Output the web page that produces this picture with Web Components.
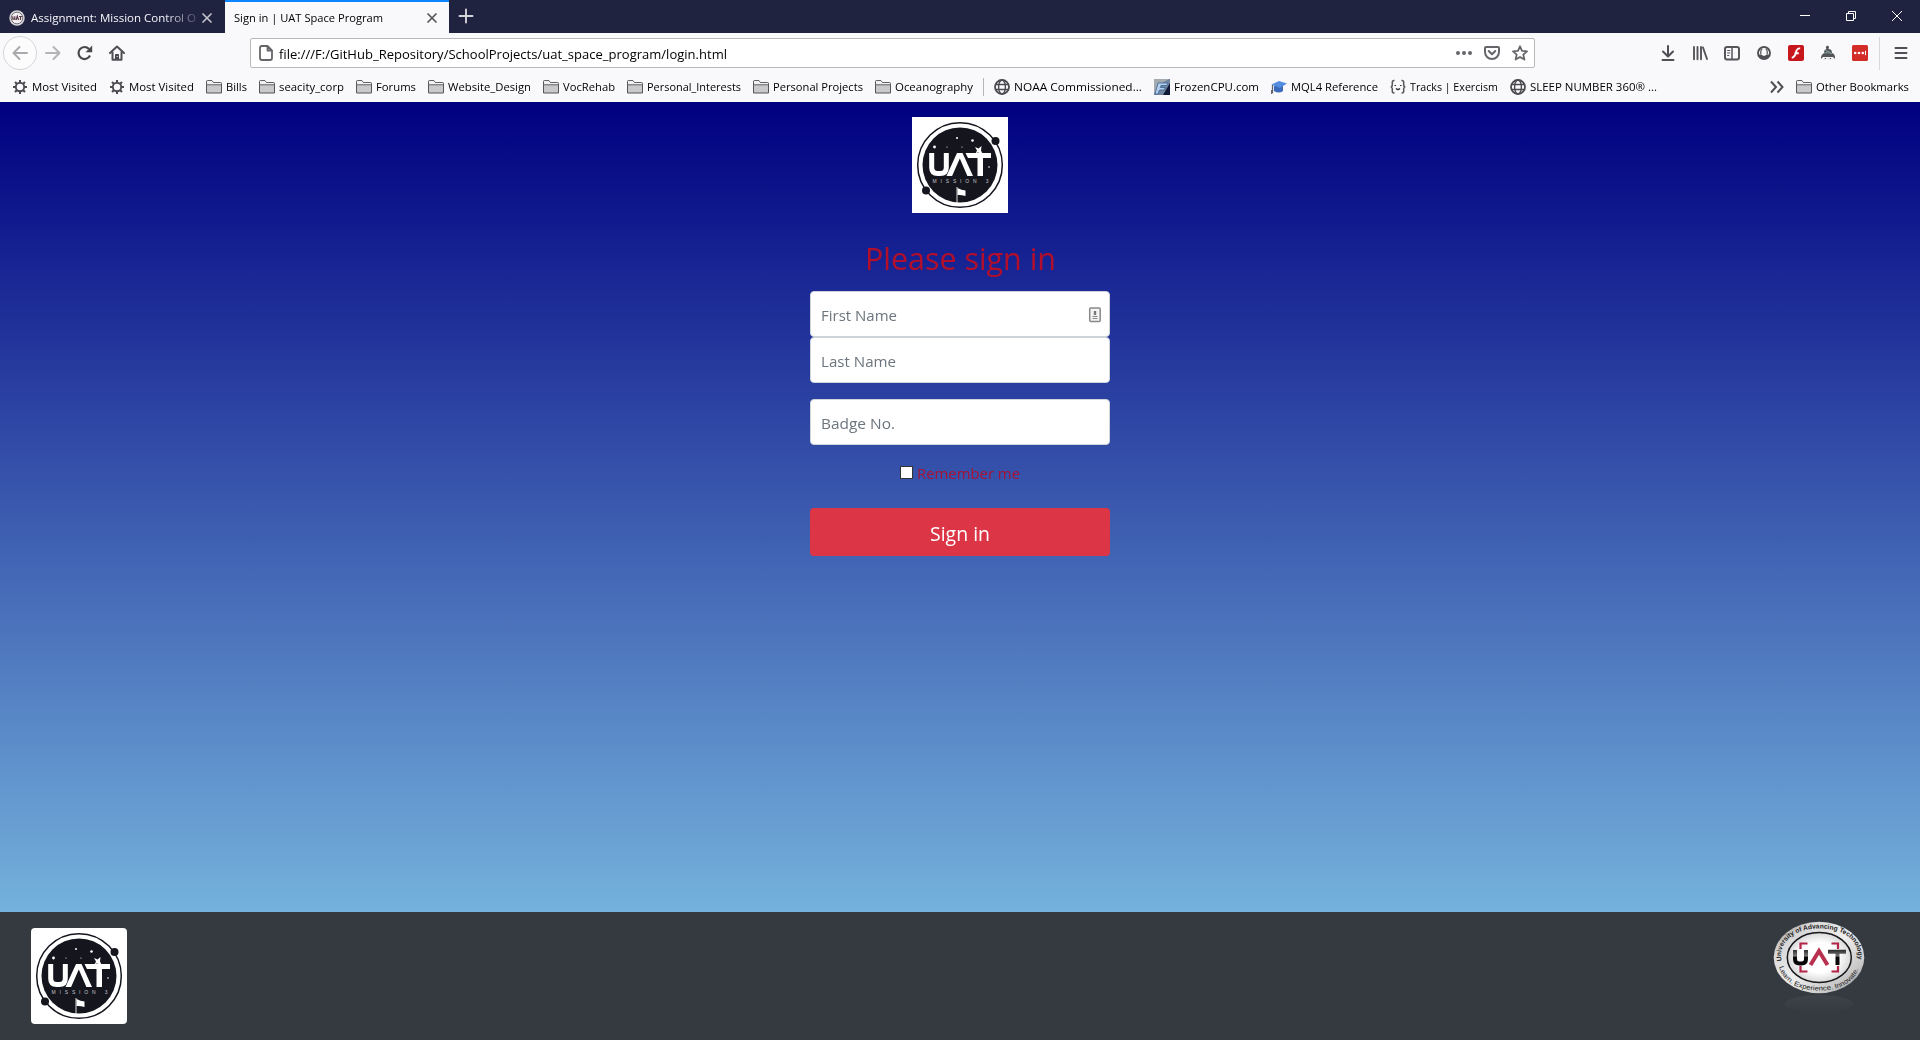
<!DOCTYPE html>
<html lang="en">
<head>
<meta charset="utf-8">
<title>Sign in | UAT Space Program</title>
<style>
html,body{margin:0;height:100%;overflow:hidden}
body{font-family:"Open Sans","Noto Sans",sans-serif}
</style>
</head>
<body>
<browser-window></browser-window>
<script>
const define = (name, html, after) => customElements.define(name, class extends HTMLElement {
  connectedCallback() {
    if (this.shadowRoot) return;
    const root = this.attachShadow({mode: 'open'});
    root.innerHTML = typeof html === 'function' ? html(this) : html;
    if (after) after(this, root);
  }
});

/* One-line label condensed or widened to the width given in w. */
define('fit-text', el => `<style>
  :host{display:block;flex:none;width:${el.getAttribute('w')}px;white-space:nowrap}
  span{display:inline-block;transform-origin:0 50%}
  </style><span><slot></slot></span>`, (el, root) => {
  const s = root.querySelector('span');
  const n = s.getBoundingClientRect().width;
  if (n) s.style.transform = `scaleX(${el.getAttribute('w') / n})`;
});

const G = 'fill="none" stroke="#505054" stroke-width="2" stroke-linecap="round" stroke-linejoin="round"';
const icons = {
  gear: `<circle cx="8" cy="8" r="4.2" fill="none" stroke="#4c4c50" stroke-width="1.9"/><g stroke="#4c4c50" stroke-width="2"><path d="M8 1v2.5M8 12.500v2.500M1 8h2.500M12.500 8h2.500M3 3l1.800 1.800M11.200 11.200l1.800 1.800M13 3l-1.800 1.800M4.800 11.200l-1.800 1.800"/></g>`,
  folder: `<path d="M.5 14V2.500q0-.9.9-.9H6l1.500 2h7.100q.9 0 .9.900V14z" fill="#c9c9cc" stroke="#55555a"/><path d="M1 2.100h4.800l1.400 2h7.800v1.400H1z" fill="#f1f1f2"/><path d="M.5 5.800h15" stroke="#66666a"/>`,
  globe: `<g fill="none" stroke="#4c4c50" stroke-width="1.400"><circle cx="8" cy="8" r="7"  stroke-width="1.800"/><ellipse cx="8" cy="8" rx="3.400" ry="7"/><path d="M1.500 5.500h13M1.500 10.500h13"/></g>`,
  frozen: `<path d="M0 0h16v16H0z" fill="#71859f"/><path d="M0 0h15L8 4 2 12 0 15z" fill="#a4abb0"/><path d="M16 4v12H9z" fill="#101a38"/><path d="M4 4h10l-1 2.500H7l-.7 2h5L10 11H5.500L4 15H1z" fill="#b4d0ee" stroke="#3c6595" stroke-width=".8"/>`,
  cap: `<path d="M3 7v5q5 3 9 0V6z" fill="#3a6cbb"/><path d="M.5 5.500L8 2l8 2.500L9 9z" fill="#548ce0"/><path d="M1.500 6v8M.7 11v4" stroke="#5b626c" stroke-width="1.300"/>`,
  tracks: `<path d="M4.500 1.500H4q-1.700 0-1.700 2v2Q2.300 8 .7 8q1.600 0 1.600 2v2q0 2 1.700 2h.5M11.500 1.500h.5q1.700 0 1.700 2v2q0 2.500 1.600 2.500-1.600 0-1.600 2v2q0 2-1.700 2h-.5" fill="none" stroke="#55555a" stroke-width="1.500"/><path d="M4.500 6.500h1.600M10 6.500h1.600M6 9.500q2 2 4 0" fill="none" stroke="#333" stroke-width="1.200"/>`,
  more: `<path d="M2 2.500L7 8l-5 5.500M8.500 2.500l5 5.500-5 5.500" fill="none" stroke="#505054" stroke-width="2"/>`,
  back: `<path d="M15 8H1.500M7.500 2L1.500 8l6 6" fill="none" stroke="#aaaaad" stroke-width="2" stroke-linecap="round" stroke-linejoin="round"/>`,
  fwd: `<path d="M1 8h13.500M8.500 2l6 6-6 6" fill="none" stroke="#b4b4b7" stroke-width="2" stroke-linecap="round" stroke-linejoin="round"/>`,
  reload: `<path d="M13 10.500A6 6 0 1 1 12 4" fill="none" stroke="#48484c" stroke-width="2.200"/><path d="M15.200.5v6.800H8.500z" fill="#48484c"/>`,
  home: `<path d="M1 8l7-6.500L15 8M3.500 7.500V14.700h9V7.500" ${G}/><path d="M6.500 14V9.500h3V14" fill="#48484c" stroke="#48484c"/><path d="M8.200 11v1" stroke="#fff"/>`,
  page: `<path d="M3.500 1h6L14 5.500V13q0 2-2 2H4q-2 0-2-2V3q0-2 2-2zM9.500 1v4.500H14" fill="none" stroke="#66666a" stroke-width="1.800" stroke-linejoin="round"/>`,
  dots: `<g fill="#66666a"><circle cx="2" cy="8" r="2"/><circle cx="8" cy="8" r="2"/><circle cx="14" cy="8" r="2"/></g>`,
  pocket: `<path d="M2 2h12q1 0 1 1v4a7 7 0 0 1-14 0V3q0-1 1-1z" fill="none" stroke="#66666a" stroke-width="2"/><path d="M4.700 6L8 9.200 11.300 6" fill="none" stroke="#66666a" stroke-width="2" stroke-linecap="round" stroke-linejoin="round"/>`,
  star: `<path d="M8 1.300l2 4.500 5 .5-3.700 3.300 1.100 5L8 12l-4.400 2.600 1.100-5L1 6.300l5-.5z" fill="none" stroke="#66666a" stroke-width="1.800" stroke-linejoin="round"/>`,
  down: `<path d="M8 1v10M3 6.500l5 5 5-5M2.500 15h11" ${G}/>`,
  library: `<path d="M2 2v12.200M5.500 2v12.200M9 2v12.200M11 2.500l4 11.500" fill="none" stroke="#55555a" stroke-width="1.900" stroke-linecap="round"/>`,
  sidebar: `<rect x="1" y="2" width="14" height="12.500" rx="2" fill="none" stroke="#55555a" stroke-width="2"/><path d="M8 2v12" stroke="#55555a" stroke-width="1.500"/><path d="M3.200 5.500h3M3.200 8h3M3.200 10.500h2" stroke="#55555a"/>`,
  account: `<circle cx="8" cy="8" r="6" fill="none" stroke="#505054" stroke-width="1.900"/><path d="M2.500 9.500Q5 9.500 5.500 9.800 8 12 10.500 9.800 11 9.500 13.500 9.500 12 14 8 14T2.500 9.500z" fill="#505054"/><path d="M4.800 9.500V6.500q0-2 1.500-2.700M11.200 9.500V6.500q0-2-1.500-2.700" fill="none" stroke="#505054" stroke-width="1.200"/>`,
  flash: `<rect width="16" height="16" rx="2" fill="#c8161d"/><path d="M12.200 3.400Q9 3 8 7.200 7 12 3.800 12.800M6.500 8.200h4.300" fill="none" stroke="#fff" stroke-width="1.900"/>`,
  monkey: `<path d="M1 14q-.5-4 3-6Q4 4 6.500 4.200 5 2 7 .8q2-.5 2 1.500L8.500 4Q12 4 12 8q3.500 1 3 6l-2-2H3z" fill="#51555a"/><path d="M4 8q3-1 8 .5M5.500 5.500l5 2" stroke="#86a094" stroke-width="1" fill="none"/><path d="M3 13q5-2 10 0v2H3z" fill="#ececec"/><path d="M5.300 13v1M10.300 13v1" stroke="#333"/>`,
  pass: `<rect width="16" height="16" rx="1.500" fill="#d32d27"/><g fill="#fff"><circle cx="3.200" cy="8" r="1.300"/><circle cx="7" cy="8" r="1.300"/><circle cx="10.800" cy="8" r="1.300"/><path d="M13 5.800h1v4.400h-1z"/></g>`,
  menu: `<path d="M2.500 3h11M2.500 8h11M2.500 13h11" ${G}/>`,
  min: `<path d="M3 7.500h10" stroke="#fff"/>`,
  restore: `<path d="M3.500 5.500h7v7h-7zM5.500 5.500v-2h7v7h-2" fill="none" stroke="#fff"/>`,
  close: `<path d="M3 3l10 10M13 3L3 13" stroke="#fff"/>`,
  x: `<path d="M4 4l8 8M12 4l-8 8" stroke="currentColor" stroke-width="1.700" stroke-linecap="round"/>`,
  plus: `<path d="M8 1.500v13M1.500 8h13" stroke="#d4d4dd" stroke-width="1.900" stroke-linecap="round"/>`,
  fav: `<circle cx="8" cy="8" r="7.700" fill="#d8d5d8"/><circle cx="8" cy="8" r="5.800" fill="#f4f0f2" stroke="#77727a"/><path d="M3.800 6.200v3h2v-3M7 10l1.300-3.800L9.500 10M10 6.500h3.200M11.500 6.500V10" fill="none" stroke="#5b3d49" stroke-width="1.200"/>`,
  contact: `<rect x="2.700" y="1" width="10.500" height="13.500" rx="1" fill="#f4f4f4" stroke="#88888b" stroke-width="1.500"/><path d="M8 4v4" stroke="#77777a" stroke-width="2.400"/><path d="M5.500 9.500h5M5.500 11.500h5" stroke="#88888b" stroke-width="1.200"/>`
};
define('ui-icon', el => `<style>:host{display:block;flex:none;width:16px;height:16px}svg{display:block}</style>
  <svg width="16" height="16" viewBox="0 0 16 16">${icons[el.getAttribute('name')]}</svg>`);

define('browser-tab', `<style>
  :host{display:flex;align-items:center;box-sizing:border-box;width:224px;height:33px;color:#f5f5fa;font-size:11.5px;line-height:16px;padding:3px 9px 0 9px;border-top:0}
  :host([active]){background:#f9f9fb;color:#000;border-top:2px solid #0a84ff;padding-top:1px}
  .t{flex:1;overflow:hidden;display:flex;gap:6px}
  :host(:not([active])) .t{-webkit-mask-image:linear-gradient(90deg,#000 155px,transparent 195px);mask-image:linear-gradient(90deg,#000 155px,transparent 195px)}
  ui-icon{color:#c2c2cc}:host([active]) ui-icon{color:#55555a}
  </style><div class="t"><slot></slot></div><ui-icon name="x"></ui-icon>`);

define('tab-strip', `<style>
  :host{display:flex;height:33px;background:#202340;align-items:stretch}
  .first{width:225px;padding-right:10px}
  .plus{padding:8px 0 0 9px}.sp{flex:1}
  .win{display:flex;gap:30px;padding:8px 15px 0 0}
  </style>
  <browser-tab class="first"><ui-icon name="fav"></ui-icon><fit-text w="165">Assignment: Mission Control O</fit-text></browser-tab>
  <browser-tab active><fit-text w="149">Sign in | UAT Space Program</fit-text></browser-tab>
  <ui-icon class="plus" name="plus"></ui-icon><div class="sp"></div>
  <div class="win"><ui-icon name="min"></ui-icon><ui-icon name="restore"></ui-icon><ui-icon name="close"></ui-icon></div>`);

define('nav-bar', `<style>
  :host{display:flex;align-items:center;height:40px;box-sizing:border-box;padding-left:3px;background:#f9f9fb}
  .back{width:32px;height:32px;border:1px solid #d5d5d8;border-radius:50%;display:grid;place-items:center;background:#fcfcfd}
  .nav{display:flex;gap:16px;margin-left:8px}
  .url{box-sizing:border-box;width:1285px;height:30px;margin-left:125px;background:#fff;border:1px solid #b9b9bc;border-radius:2px;display:flex;align-items:center;padding:0 6px 0 7px;font-size:13.300px;line-height:20px;color:#000}
  .url fit-text{margin-left:5px;padding-top:2px}.acts{margin-left:auto;display:flex;gap:12px}
  .tools{display:flex;gap:16px;margin-left:125px}
  .sep{width:1px;height:33px;background:#d7d7da;margin:0 13px 0 11px}
  </style>
  <div class="back"><ui-icon name="back"></ui-icon></div>
  <div class="nav"><ui-icon name="fwd"></ui-icon><ui-icon name="reload"></ui-icon><ui-icon name="home"></ui-icon></div>
  <div class="url"><ui-icon name="page"></ui-icon><fit-text w="448">file:///F:/GitHub_Repository/SchoolProjects/uat_space_program/login.html</fit-text>
  <div class="acts"><ui-icon name="dots"></ui-icon><ui-icon name="pocket"></ui-icon><ui-icon name="star"></ui-icon></div></div>
  <div class="tools">${['down','library','sidebar','account','flash','monkey','pass'].map(n => `<ui-icon name="${n}"></ui-icon>`).join('')}</div>
  <div class="sep"></div><ui-icon name="menu"></ui-icon>`);

define('book-mark', el => `<style>:host{display:flex;align-items:center;gap:4px;flex:none}fit-text{line-height:16px}</style>
  <ui-icon name="${el.getAttribute('icon')}"></ui-icon><fit-text w="${el.getAttribute('w')}">${el.getAttribute('label')}</fit-text>`);

const bm = a => a.map(([i, w, l]) => `<book-mark icon="${i}" w="${w}" label="${l}"></book-mark>`).join('');
define('bookmark-bar', `<style>
  :host{display:flex;align-items:center;gap:12px;height:29px;box-sizing:border-box;padding:0 11px 1px 12px;background:#f9f9fb;font-size:11.500px;color:#000}
  .sep{width:1px;height:18px;background:#b5b5b8;margin:0 -2px}
  .more{margin-left:auto;margin-right:-1px}
  </style>
  ${bm([['gear',65,'Most Visited'],['gear',65,'Most Visited'],['folder',21,'Bills'],['folder',65,'seacity_corp'],['folder',40,'Forums'],['folder',83,'Website_Design'],['folder',52,'VocRehab'],['folder',94,'Personal_Interests'],['folder',90,'Personal Projects'],['folder',78,'Oceanography']])}
  <div class="sep"></div>
  ${bm([['globe',128,'NOAA Commissioned...'],['frozen',85,'FrozenCPU.com'],['cap',87,'MQL4 Reference'],['tracks',88,'Tracks | Exercism'],['globe',127,'SLEEP NUMBER 360® ...']])}
  <ui-icon class="more" name="more"></ui-icon>${bm([['folder',93,'Other Bookmarks']])}`);

define('mission-logo', `<style>:host{display:block;width:96px;height:96px;background:#fff;overflow:hidden}svg{display:block}</style>
  <svg width="96" height="96" viewBox="0 0 96 96">
  <circle cx="48" cy="48" r="42.300" fill="#fff" stroke="#14151d" stroke-width="1.500"/>
  <circle cx="48" cy="48" r="37.500" fill="#14151d"/>
  <circle cx="83.500" cy="24" r="4" fill="#14151d"/><circle cx="14" cy="73.500" r="4" fill="#14151d"/>
  <path d="M19.700 36V50.500q0 6 6 6h2.600q6 0 6-6V36" fill="none" stroke="#fff" stroke-width="5"/>
  <path d="M34.500 59L45 36h5.500L61 59h-5.600L47.800 41.500 40.100 59z" fill="#fff"/>
  <path d="M53.500 36h25.500v5H71v18h-5.500V41H56z" fill="#fff"/>
  <path d="M63 30l3.500 1.500 3-2.500-.5 4.500 1.500 3-5-1-2 1 1.500-3z" fill="#fff"/>
  <g fill="#fff"><circle cx="22.500" cy="30" r="1.400"/><circle cx="45" cy="21" r="1"/><circle cx="60.500" cy="23.500" r="1.300"/><circle cx="35" cy="30" r=".6"/><circle cx="50" cy="30" r=".6"/><circle cx="77" cy="50" r=".8"/></g>
  <path d="M45 70v16" stroke="#ddd" stroke-width="1"/><path d="M45.500 71q4 2 8 2.500v5.500q-5-1.500-8-1z" fill="#fff"/>
  <text x="20.500" y="65.700" font-family="Liberation Sans" font-size="5" fill="#c4c4ca" textLength="56">MISSION 3</text></svg>`);

define('uat-seal', `<style>:host{display:block;width:92px;height:96px}svg{display:block;overflow:visible}</style>
  <svg width="92" height="96" viewBox="0 0 92 96"><defs>
  <linearGradient id="m" x1="0" y1="0" x2="1" y2="1"><stop offset="0" stop-color="#777"/><stop offset=".22" stop-color="#d8d8d8"/><stop offset=".5" stop-color="#eee"/><stop offset=".78" stop-color="#c8c8c8"/><stop offset="1" stop-color="#828282"/></linearGradient>
  <radialGradient id="w"><stop offset=".6" stop-color="#fff"/><stop offset="1" stop-color="#d8d8d8"/></radialGradient>
  <linearGradient id="r" x1="0" y1="0" x2="0" y2="1"><stop offset="0" stop-color="#fff" stop-opacity=".05"/><stop offset="1" stop-color="#fff" stop-opacity="0"/></linearGradient>
  <linearGradient id="k" gradientUnits="userSpaceOnUse" x1="0" y1="28" x2="0" y2="45"><stop offset="0" stop-color="#222"/><stop offset=".4" stop-color="#777"/><stop offset=".5" stop-color="#080808"/></linearGradient>
  <path id="up" d="M8.500 40C5 22 20 7.500 46.500 7.500S88 22 84.500 40"/><path id="lo" d="M5.500 44C9 61 25 69.500 46 69.500S83 61 86.500 44"/></defs>
  <ellipse cx="46" cy="83" rx="34" ry="9" fill="url(#r)"/>
  <ellipse cx="46" cy="36.500" rx="45.300" ry="35.800" fill="url(#m)"/>
  <ellipse cx="46.300" cy="36.500" rx="32" ry="25" fill="url(#w)" stroke="#17171c" stroke-width="1.500"/>
  <g font-family="Liberation Sans Narrow,Liberation Sans" fill="#222"><text font-size="6.700" font-weight="bold" textLength="114" lengthAdjust="spacingAndGlyphs"><textPath href="#up">University of Advancing Technology</textPath></text>
  <text font-size="6.700" textLength="98" lengthAdjust="spacingAndGlyphs"><textPath href="#lo" startOffset="2">Learn. Experience. Innovate.</textPath></text></g>
  <path d="M27.500 28v-5.500h7M58.500 22.500H65V28M27.500 45v5.500h7M58.500 50.500H65V45" fill="none" stroke="#b32447" stroke-width="2.200"/>
  <path d="M22 29v9q0 4.500 4.500 4.500h2q4.500 0 4.500-4.500v-9M55 30.700h18M64.500 30.700V44" fill="none" stroke="url(#k)" stroke-width="4"/>
  <path d="M37.500 44L46 30l8.500 14" fill="none" stroke="#b8314e" stroke-width="4"/></svg>`);

define('form-field', `<style>
  :host{display:flex;align-items:center;justify-content:space-between;box-sizing:border-box;width:300px;height:46px;border:1px solid #ced4da;border-radius:4px;background:#fff;padding:1px 6px 0 10px;color:#6c757d;font-size:15.300px;line-height:24px}
  ui-icon{margin-top:-3px}</style><slot></slot>`);

define('sign-in-page', `<style>
  :host{display:flex;flex-direction:column;align-items:center;height:810px;box-sizing:border-box;padding-top:15px;background:linear-gradient(#000080 0,#87ceeb 938px) 0 0/100% 938px no-repeat;color:#b30f2b}
  .h{font-size:31.500px;line-height:38px;margin:26px 0 14px}
  .last{margin-bottom:16px}
  .rem{display:flex;align-items:center;gap:4px;font-size:15.300px;line-height:24px;margin:16px 0 23px;color:#a81236}
  .box{width:13px;height:13px;box-sizing:border-box;background:#fff;border:1px solid #333;margin-top:-1px}
  .btn{width:300px;height:48px;border-radius:4px;background:#dc3545;color:#fff;display:flex;justify-content:center;align-items:center;font-size:19.300px;line-height:28px;box-sizing:border-box;padding-top:4px}
  </style>
  <mission-logo></mission-logo>
  <fit-text class="h" w="191">Please sign in</fit-text>
  <form-field><fit-text w="76">First Name</fit-text><ui-icon name="contact"></ui-icon></form-field>
  <form-field class="last"><fit-text w="75">Last Name</fit-text></form-field>
  <form-field><fit-text w="74">Badge No.</fit-text></form-field>
  <div class="rem"><div class="box"></div><fit-text w="103">Remember me</fit-text></div>
  <div class="btn"><fit-text w="60">Sign in</fit-text></div>`);

define('page-footer', `<style>
  :host{display:flex;justify-content:space-between;height:128px;box-sizing:border-box;background:#343a40;padding:16px 55px 0 31px}
  mission-logo{border-radius:4px}uat-seal{margin-top:-7px}</style>
  <mission-logo></mission-logo><uat-seal></uat-seal>`);

define('browser-window', `<style>:host{display:flex;flex-direction:column;width:1920px;height:1040px}</style>
  <tab-strip></tab-strip><nav-bar></nav-bar><bookmark-bar></bookmark-bar><sign-in-page></sign-in-page><page-footer></page-footer>`);
</script>
</body>
</html>
